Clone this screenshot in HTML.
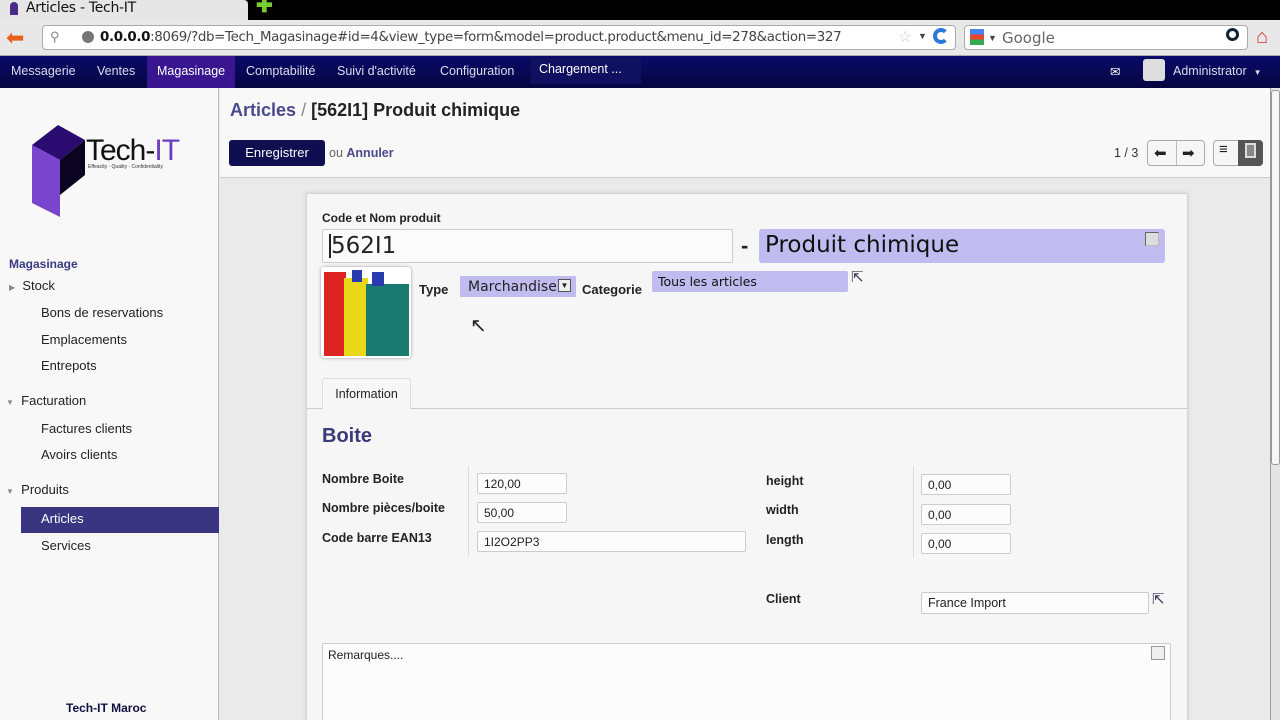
<!DOCTYPE html>
<html><head><meta charset="utf-8"><style>
*{box-sizing:border-box;margin:0;padding:0}
html,body{width:1280px;height:720px;overflow:hidden}
body{position:relative;font-family:"Liberation Sans",sans-serif;background:#eaeaea;color:#222}
.a{position:absolute}
.inp{position:absolute;background:#fcfcfc;border:1px solid #ccc;border-radius:2px;font-size:12px;padding:0 6px;display:flex;align-items:center}
.lbl{position:absolute;font-size:13px;font-weight:bold;color:#222}
.nav span{position:absolute;top:64px;font-size:12.5px;color:#dde}
.sb{position:absolute;font-size:13px;color:#222}
</style></head><body>
<div class="a" style="left:0;top:0;width:1280px;height:20px;background:#000"></div>
<div class="a" style="left:0;top:0;width:248px;height:22px;background:#e6e6e6;border-radius:0 4px 0 0"></div>
<div class="a" style="left:10px;top:2px;width:8px;height:13px;background:#4a2a8a;border-radius:4px 4px 0 0"></div>
<div class="a" style="left:26px;top:0;font-size:14px;color:#111;font-family:'DejaVu Sans',sans-serif;letter-spacing:-0.3px">Articles - Tech-IT</div>
<div class="a" style="left:256px;top:0;width:14px;height:14px;color:#7c3;font-size:20px;line-height:12px;font-weight:bold">✚</div>
<div class="a" style="left:0;top:20px;width:1280px;height:36px;background:#e8e8e8;border-bottom:1px solid #aaa"></div>
<div class="a" style="left:6px;top:27px;color:#e8601c;font-size:22px;line-height:22px">⬅</div>
<div class="a" style="left:42px;top:25px;width:914px;height:25px;background:#fff;border:1px solid #aaa;border-radius:4px"></div>
<div class="a" style="left:50px;top:29px;font-size:13px;color:#888">⚲</div>
<div class="a" style="left:82px;top:31px;width:12px;height:12px;border-radius:50%;background:#777"></div>
<div class="a" style="left:100px;top:30px;font-size:13.4px;color:#444;font-family:'DejaVu Sans',sans-serif;letter-spacing:-0.35px;white-space:nowrap"><b style="color:#111">0.0.0.0</b>:8069/?db=Tech_Magasinage#id=4&amp;view_type=form&amp;model=product.product&amp;menu_id=278&amp;action=327</div>
<div class="a" style="left:898px;top:27px;font-size:16px;color:#ccc">☆</div>
<div class="a" style="left:918px;top:31px;font-size:9px;color:#444">▼</div>
<div class="a" style="left:933px;top:28px;width:16px;height:16px;border-radius:50%;border:4px solid #2a7ad8;border-right-color:transparent"></div>
<div class="a" style="left:964px;top:25px;width:284px;height:25px;background:#fff;border:1px solid #aaa;border-radius:4px"></div>
<div class="a" style="left:970px;top:29px;width:14px;height:16px;background:linear-gradient(#4285f4 33%,#ea4335 33% 66%,#34a853 66%)"></div>
<div class="a" style="left:988px;top:33px;font-size:9px;color:#444">▼</div>
<div class="a" style="left:1002px;top:29px;font-size:15px;color:#666;font-family:'DejaVu Sans',sans-serif">Google</div>
<div class="a" style="left:1226px;top:28px;width:13px;height:13px;border-radius:50%;border:3px solid #123"></div>
<div class="a" style="left:1256px;top:26px;color:#c33;font-size:20px">⌂</div>
<div class="a" style="left:0;top:56px;width:1280px;height:32px;background:linear-gradient(#0a0a6a,#050540)"></div>
<div class="a" style="left:147px;top:56px;width:88px;height:32px;background:#3a1590"></div>
<div class="nav">
<span style="left:11px">Messagerie</span><span style="left:97px">Ventes</span><span style="left:157px;color:#fff">Magasinage</span><span style="left:246px">Comptabilité</span><span style="left:337px">Suivi d'activité</span><span style="left:440px">Configuration</span><span style="left:531px;top:58px;height:26px;width:110px;background:#101060;padding:4px 8px;color:#fff">Chargement ...</span>
<span style="left:1110px;color:#fff">✉</span>
<span style="left:1143px;top:59px;width:22px;height:22px;background:#ddd;border-radius:3px"></span>
<span style="left:1173px">Administrator &nbsp;<small style="font-size:8px">▼</small></span>
</div>
<div class="a" style="left:0;top:88px;width:219px;height:632px;background:#f8f8f8;border-right:1px solid #bbb"></div>
<svg class="a" style="left:30px;top:125px" width="60" height="95"><polygon points="2,20 28,0 55,15 30,35" fill="#2a0b70"/><polygon points="2,20 30,35 30,92 2,78" fill="#7a44cc"/><polygon points="30,35 55,15 55,50 30,70" fill="#0a0420"/></svg>
<div class="a" style="left:86px;top:134px;font-size:30px;color:#111;letter-spacing:-1px;font-family:'Liberation Sans Narrow','Liberation Sans',sans-serif">Tech-<span style="color:#6a3cc0">IT</span></div>
<div class="a" style="left:88px;top:164px;font-size:5px;color:#333">Effeacity · Quality · Confidentiality</div>
<div class="a" style="left:9px;top:257px;font-size:12px;font-weight:bold;color:#3a3a80">Magasinage</div>
<div class="sb" style="left:9px;top:278px"><small style="font-size:8px;color:#888">▶</small>&nbsp; Stock</div>
<div class="sb" style="left:41px;top:305px">Bons de reservations</div>
<div class="sb" style="left:41px;top:332px">Emplacements</div>
<div class="sb" style="left:41px;top:358px">Entrepots</div>
<div class="sb" style="left:6px;top:393px"><small style="font-size:8px;color:#888">▼</small>&nbsp; Facturation</div>
<div class="sb" style="left:41px;top:421px">Factures clients</div>
<div class="sb" style="left:41px;top:447px">Avoirs clients</div>
<div class="sb" style="left:6px;top:482px"><small style="font-size:8px;color:#888">▼</small>&nbsp; Produits</div>
<div class="a" style="left:21px;top:507px;width:198px;height:26px;background:#3a3580"></div>
<div class="sb" style="left:41px;top:511px;color:#fff">Articles</div>
<div class="sb" style="left:41px;top:538px">Services</div>
<div class="a" style="left:66px;top:701px;font-size:12px;font-weight:bold;color:#101040">Tech-IT Maroc</div>
<div class="a" style="left:220px;top:88px;width:1050px;height:90px;background:#f8f8f8;border-bottom:1px solid #ccc"></div>
<div class="a" style="left:230px;top:100px;font-size:18px;font-weight:bold;color:#222"><span style="color:#4a4a8a">Articles</span> <span style="color:#888;font-weight:normal">/</span> [562I1] Produit chimique</div>
<div class="a" style="left:229px;top:140px;width:96px;height:26px;background:#0e0e50;border-radius:3px;color:#fff;font-size:13px;text-align:center;line-height:26px">Enregistrer</div>
<div class="a" style="left:329px;top:146px;font-size:12.5px;color:#666">ou <b style="color:#4a4a8a">Annuler</b></div>
<div class="a" style="left:1114px;top:146px;font-size:12.5px;color:#333">1 / 3</div>
<div class="a" style="left:1147px;top:140px;width:58px;height:26px;border:1px solid #aaa;border-radius:4px;background:#f6f6f6"></div>
<div class="a" style="left:1176px;top:141px;width:1px;height:24px;background:#bbb"></div>
<div class="a" style="left:1154px;top:144px;font-size:15px">⬅</div>
<div class="a" style="left:1182px;top:144px;font-size:15px">➡</div>
<div class="a" style="left:1213px;top:140px;width:50px;height:26px;border:1px solid #aaa;border-radius:4px;background:#f6f6f6"></div>
<div class="a" style="left:1238px;top:140px;width:25px;height:26px;background:#555;border-radius:0 4px 4px 0"></div>
<div class="a" style="left:1219px;top:141px;font-size:15px">≡</div>
<div class="a" style="left:1245px;top:143px;width:11px;height:15px;border:2px solid #ddd;background:#888"></div>
<div class="a" style="left:1270px;top:88px;width:10px;height:632px;background:#e4e4e4;border-left:1px solid #999"></div>
<div class="a" style="left:1271px;top:90px;width:9px;height:375px;background:#f6f6f6;border:1px solid #999;border-radius:3px"></div>
<div class="a" style="left:306px;top:193px;width:882px;height:530px;background:#f7f6f6;border:1px solid #d4d4d4;box-shadow:0 0 4px #ccc"></div>
<div class="lbl" style="left:322px;top:211px;font-size:12px">Code et Nom produit</div>
<div class="inp" style="left:322px;top:229px;width:411px;height:34px;font-size:23px;font-family:'DejaVu Sans',sans-serif;padding-left:6px;color:#222;background:#fbfbfb"><span style="border-left:2px solid #222;line-height:24px">562I1</span></div>
<div class="a" style="left:741px;top:233px;font-size:22px;font-weight:bold">-</div>
<div class="a" style="left:759px;top:229px;width:406px;height:34px;background:#c0bcf0;border-radius:3px;font-size:23px;font-family:'DejaVu Sans',sans-serif;padding:3px 6px;color:#111">Produit chimique</div>
<div class="a" style="left:1145px;top:232px;width:14px;height:14px;border:1px solid #666;border-right-color:#bbb;border-bottom-color:#bbb;background:#ddd"></div>
<div class="a" style="left:321px;top:267px;width:90px;height:91px;background:#fff;border-radius:3px;box-shadow:0 0 3px #999"></div>
<div class="a" style="left:324px;top:272px;width:22px;height:84px;background:#d22"></div>
<div class="a" style="left:344px;top:278px;width:24px;height:78px;background:#e8d818"></div>
<div class="a" style="left:352px;top:270px;width:10px;height:12px;background:#2a3ab0"></div>
<div class="a" style="left:366px;top:284px;width:43px;height:72px;background:#1a7a70"></div>
<div class="a" style="left:372px;top:272px;width:12px;height:14px;background:#2a3ab0"></div>
<div class="lbl" style="left:419px;top:282px">Type</div>
<div class="a" style="left:460px;top:276px;width:116px;height:21px;background:#c0bcf0;font-size:14px;font-family:'DejaVu Sans',sans-serif;padding:3px 8px;color:#222">Marchandise</div>
<div class="a" style="left:558px;top:279px;width:13px;height:13px;background:#eee;border:1px solid #555;font-size:8px;text-align:center;line-height:11px">▼</div>
<div class="lbl" style="left:582px;top:282px">Categorie</div>
<div class="a" style="left:652px;top:271px;width:196px;height:21px;background:#c0bcf0;border-radius:2px;font-size:12.5px;font-family:'DejaVu Sans',sans-serif;padding:3px 6px;color:#111">Tous les articles</div>
<div class="a" style="left:851px;top:268px;font-size:15px;color:#335">⇱</div>
<div class="a" style="left:470px;top:313px;font-size:20px">↖</div>
<div class="a" style="left:307px;top:408px;width:880px;height:1px;background:#ccc"></div>
<div class="a" style="left:322px;top:378px;width:89px;height:31px;background:#f7f7f7;border:1px solid #ddd;border-bottom:none;border-radius:3px 3px 0 0;font-size:12.5px;text-align:center;line-height:30px">Information</div>
<div class="a" style="left:322px;top:425px;font-size:20px;font-weight:bold;color:#3a3a7a">Boite</div>
<div class="lbl" style="left:322px;top:472px;font-size:12.5px">Nombre Boite</div>
<div class="lbl" style="left:322px;top:501px;font-size:12.5px">Nombre pièces/boite</div>
<div class="lbl" style="left:322px;top:531px;font-size:12.5px">Code barre EAN13</div>
<div class="a" style="left:468px;top:466px;width:1px;height:90px;background:#ddd"></div>
<div class="inp" style="left:477px;top:473px;width:90px;height:21px">120,00</div>
<div class="inp" style="left:477px;top:502px;width:90px;height:21px">50,00</div>
<div class="inp" style="left:477px;top:531px;width:269px;height:21px">1I2O2PP3</div>
<div class="lbl" style="left:766px;top:474px;font-size:12.5px">height</div>
<div class="lbl" style="left:766px;top:503px;font-size:12.5px">width</div>
<div class="lbl" style="left:766px;top:533px;font-size:12.5px">length</div>
<div class="lbl" style="left:766px;top:592px;font-size:12.5px">Client</div>
<div class="a" style="left:913px;top:466px;width:1px;height:92px;background:#ddd"></div>
<div class="inp" style="left:921px;top:474px;width:90px;height:21px">0,00</div>
<div class="inp" style="left:921px;top:504px;width:90px;height:21px">0,00</div>
<div class="inp" style="left:921px;top:533px;width:90px;height:21px">0,00</div>
<div class="inp" style="left:921px;top:592px;width:228px;height:22px;font-size:12.5px">France Import</div>
<div class="a" style="left:1152px;top:590px;font-size:15px;color:#335">⇱</div>
<div class="a" style="left:322px;top:643px;width:849px;height:90px;background:#fcfcfc;border:1px solid #ccc;border-radius:2px"></div>
<div class="a" style="left:328px;top:648px;font-size:12px">Remarques....</div>
<div class="a" style="left:1151px;top:646px;width:14px;height:14px;border:1px solid #999;background:#eee"></div>
</body></html>
